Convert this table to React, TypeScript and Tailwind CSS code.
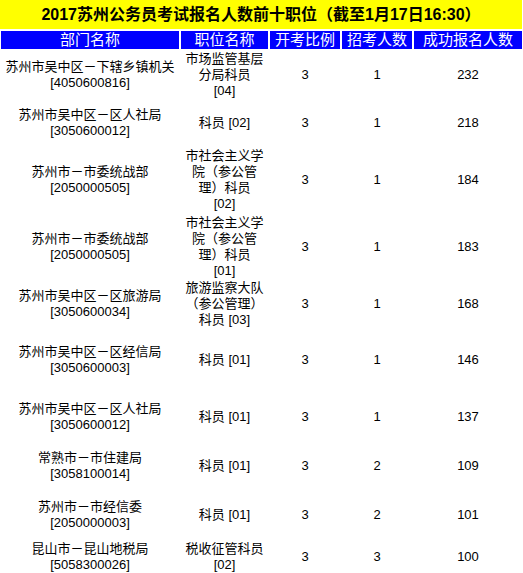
const font = { fontFamily: '"Liberation Sans", "Noto Sans CJK SC", sans-serif' }

const cols = 'grid grid-cols-[178px_87px_70px_70px_108px] gap-x-[2px] pl-[1px]'

type Row = { h: string; dept: string[]; pos: string[]; ratio: string; plan: string; count: string }

const rows: Row[] = [
  { h: 'h-[50px]', dept: ['苏州市吴中区－下辖乡镇机关', '[4050600816]'], pos: ['市场监管基层', '分局科员', '[04]'], ratio: '3', plan: '1', count: '232' },
  { h: 'h-[46px]', dept: ['苏州市吴中区－区人社局', '[3050600012]'], pos: ['科员 [02]'], ratio: '3', plan: '1', count: '218' },
  { h: 'h-[68px]', dept: ['苏州市－市委统战部', '[2050000505]'], pos: ['市社会主义学', '院（参公管', '理）科员', '[02]'], ratio: '3', plan: '1', count: '184' },
  { h: 'h-[66px]', dept: ['苏州市－市委统战部', '[2050000505]'], pos: ['市社会主义学', '院（参公管', '理）科员', '[01]'], ratio: '3', plan: '1', count: '183' },
  { h: 'h-[48px]', dept: ['苏州市吴中区－区旅游局', '[3050600034]'], pos: ['旅游监察大队', '（参公管理）', '科员 [03]'], ratio: '3', plan: '1', count: '168' },
  { h: 'h-[64px]', dept: ['苏州市吴中区－区经信局', '[3050600003]'], pos: ['科员 [01]'], ratio: '3', plan: '1', count: '146' },
  { h: 'h-[50px]', dept: ['苏州市吴中区－区人社局', '[3050600012]'], pos: ['科员 [01]'], ratio: '3', plan: '1', count: '137' },
  { h: 'h-[48px]', dept: ['常熟市－市住建局', '[3058100014]'], pos: ['科员 [01]'], ratio: '3', plan: '2', count: '109' },
  { h: 'h-[50px]', dept: ['苏州市－市经信委', '[2050000003]'], pos: ['科员 [01]'], ratio: '3', plan: '2', count: '101' },
  { h: 'h-[33px]', dept: ['昆山市－昆山地税局', '[5058300026]'], pos: ['税收征管科员', '[02]'], ratio: '3', plan: '3', count: '100' },
]

function Cell({ lines }: { lines: string[] }) {
  return (
    <div className="flex flex-col items-center justify-center text-center">
      {lines.map((l, i) => (
        <div key={i} className="whitespace-nowrap">{l}</div>
      ))}
    </div>
  )
}

export default function App() {
  return (
    <div className="w-[523px] h-[573px] overflow-hidden bg-white text-black" style={font}>
      <div className="h-[29px] w-[522px] bg-[#ffff00] flex items-center justify-center text-[16px] font-bold">
        2017苏州公务员考试报名人数前十职位（截至1月17日16:30）
      </div>
      <div className={`${cols} mt-[2px] h-[18px] text-[15px] leading-[18px] text-white`}>
        {['部门名称', '职位名称', '开考比例', '招考人数', '成功报名人数'].map((t) => (
          <div key={t} className="bg-[#0000ff] text-center">{t}</div>
        ))}
      </div>
      <div className="mt-[1px] flex flex-col text-[13px] leading-[16px]">
        {rows.map((r, i) => (
          <div key={i} className={`${cols} ${r.h}`}>
            <Cell lines={r.dept} />
            <Cell lines={r.pos} />
            <Cell lines={[r.ratio]} />
            <Cell lines={[r.plan]} />
            <Cell lines={[r.count]} />
          </div>
        ))}
      </div>
    </div>
  )
}
